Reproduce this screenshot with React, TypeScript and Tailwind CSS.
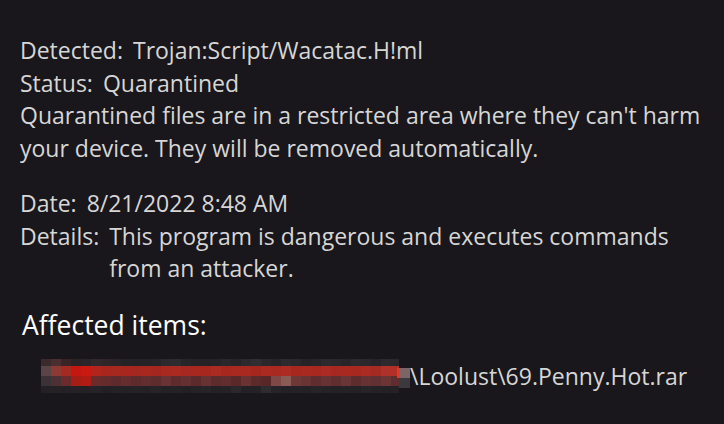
const row1 = ['#3a2a2c', '#4a2e30', '#3b2426', '#2c2327', '#2a2528', '#33282b', '#2e2629', '#2a2428', '#262327', '#242226', '#252327', '#262428', '#2c2a2e', '#2f2c30', '#282629', '#252327', '#242226', '#262428', '#2a282c', '#262428', '#2c2a2e', '#312d31', '#2a282c', '#262428', '#2e2b2f', '#2a282c', '#252327', '#272529', '#2c2a2e', '#2a282c', '#272529', '#2d2a2e', '#2a282c', '#262428', '#2c2a2e', '#2a282c']
const row2 = ['#5b4446', '#8d3a34', '#a52a22', '#c4170f', '#c81a10', '#b2241c', '#a9261f', '#a7281f', '#a8261e', '#a6271f', '#a8281f', '#a5261e', '#a9281f', '#aa2a22', '#a62820', '#a8271f', '#a7261e', '#ab2a21', '#a7271f', '#a9281f', '#a82920', '#a5261d', '#aa2921', '#a92820', '#ad2b22', '#a7271f', '#a9281f', '#a8271f', '#ab2a21', '#a62820', '#a9281f', '#a8271f', '#ab2b22', '#a52a22', '#b0302a', '#b33028']
const row3 = ['#3a3236', '#4c3034', '#6b2a2b', '#a61d16', '#b01c14', '#6a2b2c', '#642c2d', '#5f2a2b', '#662d2e', '#5d2b2c', '#632e30', '#5e2c2d', '#6a3234', '#5f2b2c', '#643031', '#5c2a2b', '#683132', '#5e2b2d', '#612d2e', '#5a2829', '#6a3233', '#5c2a2b', '#5a2728', '#7d4846', '#8a5a55', '#6e3839', '#6a3435', '#5f2d2e', '#663233', '#612e2f', '#6a3536', '#5e2c2d', '#673234', '#623032', '#6b3536', '#5e2d2f']
const row4 = ['#242126', '#252226', '#232125', '#242226', '#232125', '#252327', '#222024', '#242226', '#232125', '#242226', '#232125', '#262428', '#232125', '#242226', '#222024', '#242226', '#262428', '#232125', '#242226', '#2a282c', '#232125', '#242226', '#2e2c30', '#262428', '#232125', '#242226', '#232125', '#262428', '#242226', '#232125', '#242226', '#232125', '#262428', '#242226', '#232125', '#242226']

function Redacted() {
  const rows = [
    { y: 0, h: 7, colors: row1 },
    { y: 7, h: 10, colors: row2 },
    { y: 17, h: 10, colors: row3 },
    { y: 27, h: 7, colors: row4 },
  ]
  return (
    <svg width="369" height="34" viewBox="0 0 369 34" className="block shrink-0">
      {rows.map((r) =>
        r.colors.map((c, i) => (
          <rect key={`${r.y}-${i}`} x={i * 10} y={r.y} width={i === 35 ? 8 : 10} height={r.h} fill={c} />
        ))
      )}
      <rect x="356" y="9" width="3" height="10" fill="#e0392c" />
      <rect x="359" y="9" width="10" height="10" fill="#7d6466" />
      <rect x="358" y="19" width="11" height="10" fill="#3b393d" />
    </svg>
  )
}

function Row({ label, children }: { label: string; children: React.ReactNode }) {
  return (
    <div className="flex gap-[10px]">
      <span className="shrink-0">{label}</span>
      <span>{children}</span>
    </div>
  )
}

export default function App() {
  return (
    <div
      className="w-[724px] h-[424px] overflow-hidden bg-[#19171b] text-[#d6d6d6] pl-5 pt-[34px]"
      style={{ fontFamily: '"Open Sans", "Noto Sans", sans-serif' }}
    >
      <div className="text-[23px] leading-[32.5px]">
        <Row label="Detected:">Trojan:Script/Wacatac.H!ml</Row>
        <Row label="Status:">Quarantined</Row>
        <p className="whitespace-nowrap">
          Quarantined files are in a restricted area where they can't harm
          <br />
          your device. They will be removed automatically.
        </p>
      </div>

      <div className="mt-[23px] text-[23px] leading-[32.5px]">
        <Row label="Date:">8/21/2022 8:48 AM</Row>
        <Row label="Details:">
          This program is dangerous and executes commands
          <br />
          from an attacker.
        </Row>
      </div>

      <h2 className="mt-[24px] pl-[2px] text-[26.5px] leading-[32px] text-white">Affected items:</h2>

      <div className="mt-[18px] ml-[21px] flex items-center">
        <Redacted />
        <span className="whitespace-nowrap text-[23px] leading-[32px] text-[#d6d6d6]">\Loolust\69.Penny.Hot.rar</span>
      </div>
    </div>
  )
}
